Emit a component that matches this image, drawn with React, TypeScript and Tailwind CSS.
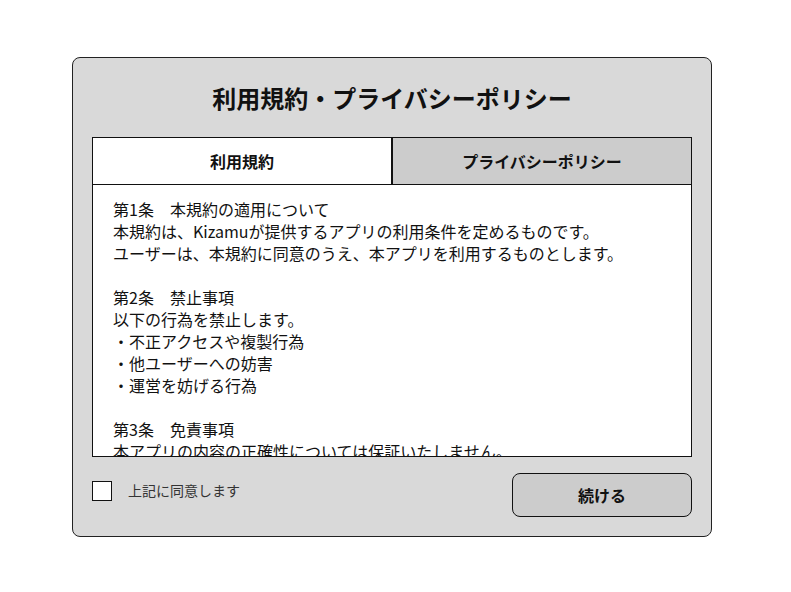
import React from "react";

export default function App() {
  const font = { fontFamily: '"Noto Sans CJK JP", "Noto Sans", sans-serif' };
  const lines = [
    "第1条　本規約の適用について",
    "本規約は、Kizamuが提供するアプリの利用条件を定めるものです。",
    "ユーザーは、本規約に同意のうえ、本アプリを利用するものとします。",
    "",
    "第2条　禁止事項",
    "以下の行為を禁止します。",
    "・不正アクセスや複製行為",
    "・他ユーザーへの妨害",
    "・運営を妨げる行為",
    "",
    "第3条　免責事項",
    "本アプリの内容の正確性については保証いたしません。",
  ];
  return (
    <div className="min-h-screen bg-white pt-[57px] pl-[72px]" style={font}>
      <div className="box-border flex h-[480px] w-[640px] flex-col rounded-[8px] border border-[#222] bg-[#d9d9d9] px-[19px] pt-[24px] text-[#111]">
        <h1 className="h-[32px] text-center text-[24px] font-bold leading-[32px]">
          利用規約・プライバシーポリシー
        </h1>
        <div className="mt-[23px] flex h-[320px] flex-col border border-[#111] bg-white">
          <div className="flex h-[47px] shrink-0 border-b border-[#111]">
            <div className="flex flex-1 items-center justify-center border-r-2 border-[#111] bg-white text-[16px] font-bold">
              利用規約
            </div>
            <div className="flex flex-1 items-center justify-center bg-[#cccccc] text-[16px] font-bold">
              プライバシーポリシー
            </div>
          </div>
          <div className="flex-1 overflow-hidden px-[20px] pt-[13px] text-[16px] leading-[22px]">
            {lines.map((l, i) => (
              <div key={i} className="h-[22px] whitespace-nowrap">
                {l}
              </div>
            ))}
          </div>
        </div>
        <div className="mt-[16px] flex items-start justify-between">
          <label className="mt-[8px] flex items-center gap-[16px]">
            <span className="box-border block h-[20px] w-[20px] border border-[#111] bg-white" />
            <span className="-mt-[2px] text-[14px] leading-[20px] text-[#333]">上記に同意します</span>
          </label>
          <button className="box-border h-[44px] w-[180px] rounded-[8px] border border-[#111] bg-[#cccccc] text-[16px] font-bold text-[#111]">
            続ける
          </button>
        </div>
      </div>
    </div>
  );
}
